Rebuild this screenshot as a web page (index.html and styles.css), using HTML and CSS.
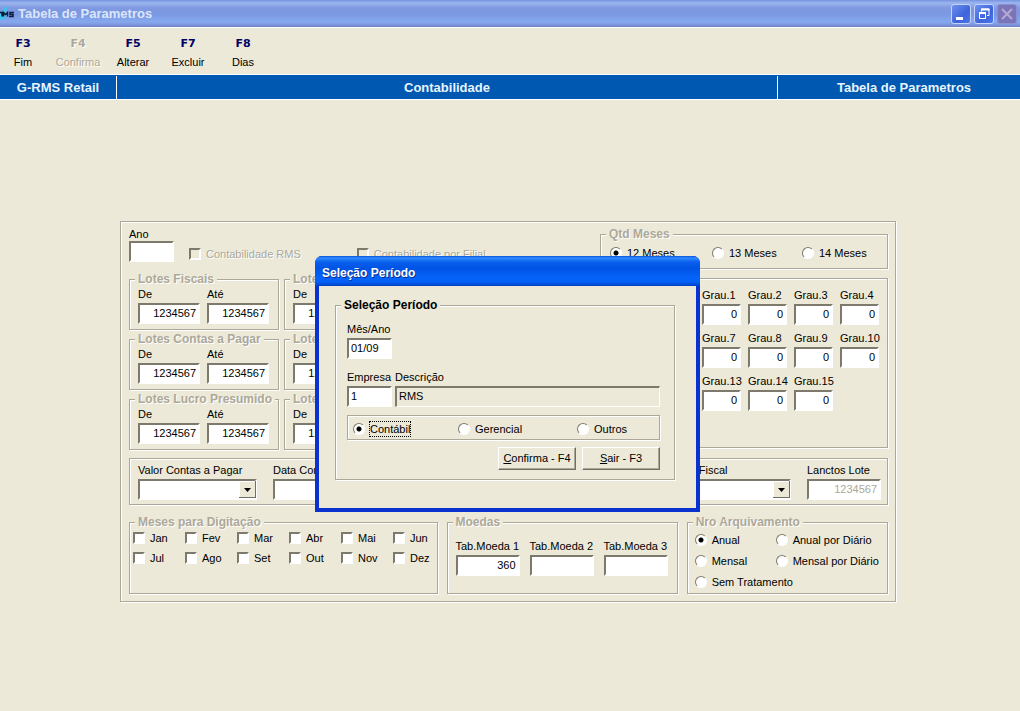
FILE: index.html
```html
<!DOCTYPE html>
<html lang="pt-BR">
<head>
<meta charset="utf-8">
<title>Tabela de Parametros</title>
<link rel="stylesheet" href="styles.css">
</head>
<body>
<header class="titlebar">
  <svg class="app-icon" width="15" height="20" viewBox="0 0 15 20" aria-hidden="true">
    <path d="M0 9 L3 6 L5 3 L8 2 L6 8 L8 11 L4 15 L0 16Z" fill="#3fc3ea"/>
    <path d="M0 8.500h2v4M3.500 12.500v-4l2 2 2-2v4M14 8.500h-4v2h3v2h-4" fill="none" stroke="#10183c" stroke-width="1.500"/>
  </svg>
  <h1 class="title">Tabela de Parametros</h1>
  <div class="window-buttons">
    <button class="wbtn" type="button" aria-label="Minimizar"><svg width="18" height="18" viewBox="0 0 18 18"><path d="M4 12h7v3H4z" fill="#fff"/></svg></button>
    <button class="wbtn" type="button" aria-label="Restaurar"><svg width="18" height="18" viewBox="0 0 18 18" fill="none" stroke="#fff"><path d="M6.500 6.500V4h7.500v6.500h-2" stroke-width="1"/><path d="M6 4.500h8.500" stroke-width="2"/><path d="M4.500 8.500h6v5h-6z" stroke-width="1"/><path d="M4 8h7" stroke-width="2"/></svg></button>
    <button class="wbtn wbtn-close" type="button" aria-label="Fechar" disabled><svg width="18" height="18" viewBox="0 0 18 18"><path d="M4 4l10 10M14 4L4 14" stroke="#b9a9cf" stroke-width="2"/></svg></button>
  </div>
</header>

<nav class="toolbar">
  <button class="tool" type="button"><b>F3</b><span>Fim</span></button>
  <button class="tool" type="button" disabled><b>F4</b><span>Confirma</span></button>
  <button class="tool" type="button"><b>F5</b><span>Alterar</span></button>
  <button class="tool" type="button"><b>F7</b><span>Excluir</span></button>
  <button class="tool" type="button"><b>F8</b><span>Dias</span></button>
</nav>

<div class="banner">
  <div>G-RMS Retail</div>
  <div>Contabilidade</div>
  <div>Tabela de Parametros</div>
</div>

<main class="panel etched">
  <div class="row-top">
    <div class="field w-short"><label for="ano">Ano</label><input id="ano" type="text"></div>
    <label class="opt off opt-rms"><input type="checkbox" disabled>Contabilidade RMS</label>
    <label class="opt off opt-filial"><input type="checkbox" disabled>Contabilidade por Filial</label>
    <fieldset class="group etched qtd">
      <legend>Qtd Meses</legend>
      <div class="qtd-grid">
        <label class="opt"><input type="radio" name="qtd" checked>12 Meses</label>
        <label class="opt"><input type="radio" name="qtd">13 Meses</label>
        <label class="opt"><input type="radio" name="qtd">14 Meses</label>
      </div>
    </fieldset>
  </div>

  <div class="row-mid">
    <div class="lotes">
      <fieldset class="group etched lote"><legend>Lotes Fiscais</legend><div class="pair">
        <div class="field"><label for="l1a">De</label><input class="num" id="l1a" type="text" value="1234567"></div>
        <div class="field"><label for="l1b">Até</label><input class="num" id="l1b" type="text" value="1234567"></div></div></fieldset>
      <fieldset class="group etched lote"><legend>Lotes</legend><div class="pair">
        <div class="field"><label for="l2a">De</label><input class="num" id="l2a" type="text" value="1234567"></div></div></fieldset>
      <fieldset class="group etched lote"><legend>Lotes Contas a Pagar</legend><div class="pair">
        <div class="field"><label for="l3a">De</label><input class="num" id="l3a" type="text" value="1234567"></div>
        <div class="field"><label for="l3b">Até</label><input class="num" id="l3b" type="text" value="1234567"></div></div></fieldset>
      <fieldset class="group etched lote"><legend>Lotes</legend><div class="pair">
        <div class="field"><label for="l4a">De</label><input class="num" id="l4a" type="text" value="1234567"></div></div></fieldset>
      <fieldset class="group etched lote"><legend>Lotes Lucro Presumido</legend><div class="pair">
        <div class="field"><label for="l5a">De</label><input class="num" id="l5a" type="text" value="1234567"></div>
        <div class="field"><label for="l5b">Até</label><input class="num" id="l5b" type="text" value="1234567"></div></div></fieldset>
      <fieldset class="group etched lote"><legend>Lotes</legend><div class="pair">
        <div class="field"><label for="l6a">De</label><input class="num" id="l6a" type="text" value="1234567"></div></div></fieldset>
    </div>
    <div class="graus etched">
      <div class="field"><label for="g1">Grau.1</label><input class="num" id="g1" type="text" value="0"></div>
      <div class="field"><label for="g2">Grau.2</label><input class="num" id="g2" type="text" value="0"></div>
      <div class="field"><label for="g3">Grau.3</label><input class="num" id="g3" type="text" value="0"></div>
      <div class="field"><label for="g4">Grau.4</label><input class="num" id="g4" type="text" value="0"></div>
      <div class="field"><label for="g7">Grau.7</label><input class="num" id="g7" type="text" value="0"></div>
      <div class="field"><label for="g8">Grau.8</label><input class="num" id="g8" type="text" value="0"></div>
      <div class="field"><label for="g9">Grau.9</label><input class="num" id="g9" type="text" value="0"></div>
      <div class="field"><label for="g10">Grau.10</label><input class="num" id="g10" type="text" value="0"></div>
      <div class="field"><label for="g13">Grau.13</label><input class="num" id="g13" type="text" value="0"></div>
      <div class="field"><label for="g14">Grau.14</label><input class="num" id="g14" type="text" value="0"></div>
      <div class="field"><label for="g15">Grau.15</label><input class="num" id="g15" type="text" value="0"></div>
    </div>
  </div>

  <div class="row-contas etched">
    <div class="field w-combo"><label for="valor">Valor Contas a Pagar</label>
      <span class="combo"><select id="valor"><option></option></select><svg width="17" height="17" viewBox="0 0 17 17" aria-hidden="true"><path d="M5 7h7l-3.500 4z" fill="#000"/></svg></span></div>
    <div class="field w-combo"><label for="data">Data Contas</label><input id="data" type="text"></div>
    <div class="field w-combo push"><label for="fiscal">Mês  Fiscal</label>
      <span class="combo"><select id="fiscal"><option></option></select><svg width="17" height="17" viewBox="0 0 17 17" aria-hidden="true"><path d="M5 7h7l-3.500 4z" fill="#000"/></svg></span></div>
    <div class="field w-lanctos"><label for="lanctos">Lanctos Lote</label><input class="num" id="lanctos" type="text" value="1234567" disabled></div>
  </div>

  <div class="row-bottom">
    <fieldset class="group etched meses">
      <legend>Meses para Digitação</legend>
      <div class="meses-grid">
        <label class="opt"><input type="checkbox">Jan</label>
        <label class="opt"><input type="checkbox">Fev</label>
        <label class="opt"><input type="checkbox">Mar</label>
        <label class="opt"><input type="checkbox">Abr</label>
        <label class="opt"><input type="checkbox">Mai</label>
        <label class="opt"><input type="checkbox">Jun</label>
        <label class="opt"><input type="checkbox">Jul</label>
        <label class="opt"><input type="checkbox">Ago</label>
        <label class="opt"><input type="checkbox">Set</label>
        <label class="opt"><input type="checkbox">Out</label>
        <label class="opt"><input type="checkbox">Nov</label>
        <label class="opt"><input type="checkbox">Dez</label>
      </div>
    </fieldset>
    <fieldset class="group etched moedas">
      <legend>Moedas</legend>
      <div class="moedas-grid">
        <div class="field"><label for="m1">Tab.Moeda 1</label><input class="num" id="m1" type="text" value="360"></div>
        <div class="field"><label for="m2">Tab.Moeda 2</label><input class="num" id="m2" type="text"></div>
        <div class="field"><label for="m3">Tab.Moeda 3</label><input class="num" id="m3" type="text"></div>
      </div>
    </fieldset>
    <fieldset class="group etched nro">
      <legend>Nro Arquivamento</legend>
      <div class="nro-grid">
        <label class="opt"><input type="radio" name="nro" checked>Anual</label>
        <label class="opt"><input type="radio" name="nro">Anual por Diário</label>
        <label class="opt"><input type="radio" name="nro">Mensal</label>
        <label class="opt"><input type="radio" name="nro">Mensal por Diário</label>
        <label class="opt wide"><input type="radio" name="nro">Sem Tratamento</label>
      </div>
    </fieldset>
  </div>
</main>

<section class="dialog" role="dialog" aria-labelledby="dlg-title">
  <h2 class="dialog-title" id="dlg-title">Seleção Período</h2>
  <div class="dialog-body">
    <fieldset class="group etched periodo">
      <legend>Seleção Período</legend>
      <div class="periodo-form">
        <div class="field w-short"><label for="mes">Mês/Ano</label><input id="mes" type="text" value="01/09"></div>
        <div class="empresa">
          <div class="field w-short"><label for="emp">Empresa</label><input id="emp" type="text" value="1"></div>
          <div class="field"><label for="desc">Descrição</label><input class="readonly" id="desc" type="text" value="RMS" readonly></div>
        </div>
        <div class="tipos etched">
          <label class="opt"><input type="radio" name="tipo" checked><span class="focus">Contábil</span></label>
          <label class="opt"><input type="radio" name="tipo">Gerencial</label>
          <label class="opt"><input type="radio" name="tipo">Outros</label>
        </div>
        <div class="actions">
          <button class="btn" type="button"><u>C</u>onfirma - F4</button>
          <button class="btn" type="button"><u>S</u>air - F3</button>
        </div>
      </div>
    </fieldset>
  </div>
</section>
</body>
</html>
```
FILE: styles.css
```css
:root {
  --face: #ece9d8;
  --shade: #aca899;
  --dark: #7d7a6d;
}

* { box-sizing: border-box; }

body {
  margin: 0;
  min-height: 100vh;
  background: var(--face);
  color: #000;
  font: 11px/14px "Liberation Sans", Arial, sans-serif;
}

input, select, button { font: inherit; color: inherit; border-radius: 0; margin: 0; }

/* Window title bar */
.titlebar {
  display: flex;
  align-items: center;
  height: 27px;
  padding-right: 3px;
  background: linear-gradient(#7593e0 0, #9cb6f0 3px, #8099e0 8px, #7b98e2 14px, #86a9ee 22px, #7d94dc 25px, #6f80bd 27px);
}
.app-icon { flex: none; margin-right: 3px; }
.title { margin: 0; flex: 1; font-size: 13px; line-height: 16px; color: #dce6fb; }
.window-buttons { display: flex; gap: 3px; }
.wbtn {
  width: 20px;
  height: 20px;
  padding: 0;
  border: 1px solid #c3d3fb;
  border-radius: 3px;
  background: linear-gradient(135deg, #6d90ee, #3f64da 60%, #4a77ea);
}
.wbtn svg { display: block; }
.wbtn-close { border-color: #8c8ed0; background: #7a75bb; }

/* Function key bar */
.toolbar {
  display: flex;
  gap: 9px;
  padding: 9px 0 5px;
  border-top: 1px solid #fff;
}
.tool {
  width: 46px;
  padding: 0;
  border: 0;
  background: none;
  display: flex;
  flex-direction: column;
  align-items: center;
  gap: 4px;
}
.tool b { font-family: "DejaVu Sans", Verdana, sans-serif; color: #000066; }
.tool:disabled, .tool:disabled b { color: var(--shade); text-shadow: 1px 1px #fff; }

.banner {
  display: grid;
  grid-template-columns: 116px 1fr 243px;
  border: 1px solid #fff;
  border-width: 1px 0;
  background: #0058b0;
  color: #e8f4ff;
  font-size: 13px;
  font-weight: bold;
  line-height: 23px;
  padding-top: 1px;
  margin-bottom: -1px;
  text-align: center;
}
.banner div + div { border-left: 1px solid #fff; }
.banner div:last-child { padding-left: 10px; }

/* Etched frames and group boxes */
.etched {
  border: 1px solid var(--shade);
  box-shadow: 1px 1px 0 #fff, inset 1px 1px 0 #fff;
}
.group { margin: 0; padding: 0; min-width: 0; }
.group legend {
  margin-left: 5px;
  padding: 0 3px;
  background: var(--face);
  color: var(--shade);
  font-size: 12px;
  font-weight: bold;
  line-height: 14px;
  text-shadow: 1px 1px #fff;
}

/* Fields */
.field { display: flex; flex-direction: column; gap: 2px; min-width: 0; white-space: nowrap; }
.field input, .combo select {
  width: 100%;
  height: 21px;
  padding: 0 2px 2px;
  border: 2px solid;
  border-color: var(--dark) #fff #fff var(--dark);
  background: #fff;
}
.field input:disabled { color: var(--shade); }
.field .num { text-align: right; }
.field .readonly { background: var(--face); border-width: 2px 1px 1px 2px; }
.w-short { width: 45px; }
.w-combo { width: 119px; }
.w-lanctos { width: 74px; }

.combo { position: relative; display: block; }
.combo select { display: block; appearance: none; }
.combo svg {
  position: absolute;
  top: 2px;
  right: 1px;
  background: var(--face);
  box-shadow: inset -1px -1px #716f64, inset 1px 1px #fff;
  pointer-events: none;
}

.opt { display: flex; align-items: center; gap: 5px; white-space: nowrap; }
.opt input {
  appearance: none;
  flex: none;
  width: 12px;
  height: 12px;
  border: 2px solid;
  border-color: var(--dark) #fff #fff var(--dark);
  background: #fff;
}
.opt input[type="radio"] { border-width: 1px; border-radius: 50%; }
.opt input[type="radio"]:checked { background: radial-gradient(circle, #000 2px, #fff 3px); }
.opt input:disabled { background: var(--face); }
.off { color: var(--shade); text-shadow: 1px 1px #fff; }

/* Parameter panel */
.panel { margin: 122px 124px 0 120px; padding: 5px 7px 7px 8px; }
.row-top { display: flex; align-items: flex-start; }
.row-top .field { gap: 0; }
.opt-rms { margin: 20px 0 0 15px; }
.opt-filial { margin: 20px 0 0 56px; }
.qtd { width: 288px; margin-left: auto; }
.qtd-grid { display: grid; grid-template-columns: 102px 90px auto; padding: 5px 9px 8px; }

.row-mid { display: flex; gap: 6px; margin-top: 3px; }
.lotes { display: grid; grid-template-columns: 150px 150px; gap: 2px 5px; }
.pair { display: grid; grid-template-columns: 62px 62px; gap: 7px; padding: 1px 8px 5px; }
.graus {
  flex: 1;
  display: grid;
  grid-template-columns: repeat(4, 39px);
  justify-content: end;
  align-content: start;
  gap: 6px 7px;
  margin: 6px 0 2px;
  padding: 9px 8px;
}

.row-contas { display: flex; margin-top: 8px; padding: 4px 6px 4px 8px; gap: 16px; }
.push { margin-left: auto; }
.push label { padding-left: 3px; }

.row-bottom { display: flex; align-items: stretch; gap: 9px; margin-top: 10px; }
.meses { flex: 309; }
.meses-grid { display: grid; grid-template-columns: repeat(6, 52px); gap: 6px 0; padding: 2px 0 0 3px; }
.moedas { flex: 231; }
.moedas-grid { display: grid; grid-template-columns: repeat(3, 64px); gap: 10px; padding: 10px 8px 0; }
.nro { flex: 201; }
.nro-grid { display: grid; grid-template-columns: 81px auto; gap: 7px 0; padding: 4px 0 4px 7px; }
.wide { grid-column: 1 / -1; }

/* Period dialog */
.dialog {
  position: absolute;
  top: 256px;
  left: 315px;
  width: 385px;
  border: 4px solid #0a32cf;
  border-top: 0;
  border-radius: 7px 7px 0 0;
  background: #0a32cf;
}
.dialog-title {
  margin: 0 -4px;
  padding: 4px 7px 0;
  border-radius: 7px 7px 0 0;
  background: linear-gradient(#0a4fd8 0, #2f8cff 2px, #0a5fee 6px, #0054e3 12px, #0563fb 22px, #0560f5 26px, #0240c4 30px);
  color: #fff;
  font-size: 12px;
  line-height: 26px;
  text-shadow: 1px 1px #0b2f8f;
}
.dialog-body { padding: 12px 21px 28px 16px; background: var(--face); }
.periodo legend { color: #000; text-shadow: none; }
.periodo-form { display: flex; flex-direction: column; padding: 10px 14px 9px 11px; }
.empresa { display: grid; grid-template-columns: 45px 1fr; gap: 3px; margin-top: 11px; }
.tipos { display: grid; grid-template-columns: 105px 119px auto; margin-top: 8px; padding: 6px 5px 3px; }
.focus { outline: 1px dotted #000; }
.actions { display: flex; justify-content: flex-end; gap: 6px; margin-top: 7px; }
.btn {
  width: 78px;
  height: 23px;
  padding: 0 0 2px;
  border: 1px solid;
  border-color: #fff #716f64 #716f64 #fff;
  background: var(--face);
  box-shadow: inset -1px -1px var(--shade);
}
```
